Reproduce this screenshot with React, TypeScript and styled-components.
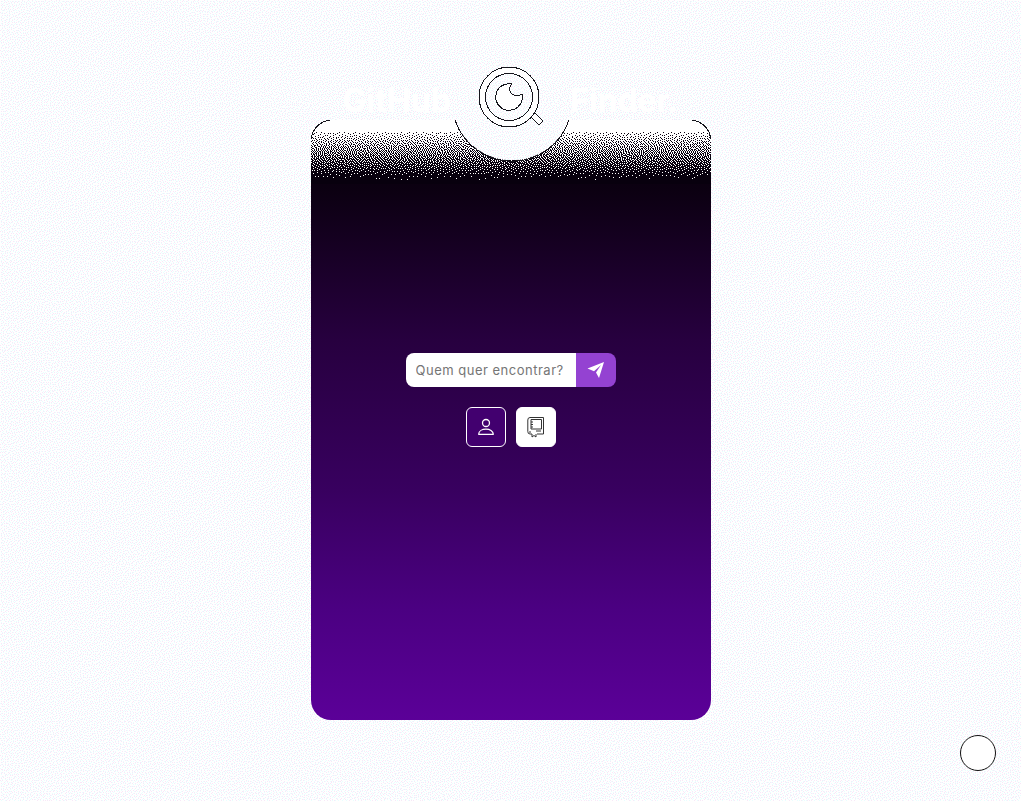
import React, { useEffect, useRef } from 'react';
import styled, { createGlobalStyle } from 'styled-components';

const Global = createGlobalStyle`
  * { box-sizing: border-box; }
  body { margin: 0; background: #fafaff; font-family: Inter, "Liberation Sans", sans-serif; overflow: hidden; }
`;

type Colour = [number, number, number];

const paperPalette: Colour[] = [[255, 255, 255], [248, 232, 248], [232, 255, 255]];
const inkPalette: Colour[] = [[255, 255, 255], [8, 0, 14]];

/* Fills a canvas by error diffusion between a few palette colours. */
function diffuse(canvas: HTMLCanvasElement, palette: Colour[], tone: (y: number) => Colour) {
  const { width: w, height: h } = canvas;
  const ctx = canvas.getContext('2d');
  if (!ctx) return;
  const image = ctx.createImageData(w, h);
  const err = new Float32Array((w + 2) * (h + 1) * 3);
  let seed = 7;
  const random = () => {
    seed = (seed * 1664525 + 1013904223) >>> 0;
    return seed / 4294967296 - 0.5;
  };
  for (let y = 0; y < h; y++) {
    const base = tone(y);
    for (let x = 0; x < w; x++) {
      const at = (y * (w + 2) + x + 1) * 3;
      const want = base.map((v, k) => v + err[at + k]);
      const jitter = random() * (palette.length === 2 ? 70 : 8);
      let best = palette[0];
      let least = Infinity;
      for (const p of palette) {
        const d = p.reduce((sum, v, k) => sum + (v - want[k] - jitter) ** 2, 0);
        if (d < least) { least = d; best = p; }
      }
      const out = (y * w + x) * 4;
      for (let k = 0; k < 3; k++) {
        const e = Math.max(-255, Math.min(255, want[k] - best[k]));
        image.data[out + k] = best[k];
        err[at + 3 + k] += e * 7 / 16;
        const below = at + (w + 2) * 3 + k;
        err[below - 3] += e * 3 / 16;
        err[below] += e * 5 / 16;
        err[below + 3] += e / 16;
      }
      image.data[out + 3] = 255;
    }
  }
  ctx.putImageData(image, 0, 0);
}

const paperTone = (): Colour => [250, 251, 254];
const inkTone = (y: number): Colour => {
  const t = Math.min(1, y / 56);
  const v = 255 * Math.pow(1 - t, 1.25);
  return [Math.max(8, v), Math.max(0, v), Math.max(14, v)];
};

const Page = styled.main`
  position: relative;
  height: 801px;
  padding-top: 120px;
  display: flex;
  justify-content: center;
  align-items: flex-start;
`;

const Grain = styled.canvas`
  position: absolute;
  inset: 0;
`;

const Card = styled.section`
  position: relative;
  width: 400px;
  height: 600px;
  border-radius: 20px;
  background: linear-gradient(#fff 0 8px, #060009 8px, #0c0012 72px, #27003f 220px, #38005f 370px, #4b0082 490px, #5b0098 600px);
  display: flex;
  flex-direction: column;
  align-items: center;
  padding-top: 233px;
  gap: 20px;
`;

const Fade = styled.canvas`
  position: absolute;
  left: 0;
  top: 8px;
`;

const Outline = styled.svg`
  position: absolute;
  left: 0;
  top: -60px;
`;

const Notch = styled.div`
  position: absolute;
  left: 141px;
  top: -20px;
  width: 120px;
  height: 60px;
  overflow: hidden;
`;

const NotchDisc = styled.div`
  position: absolute;
  bottom: 0;
  left: 0;
  width: 120px;
  height: 120px;
  border-radius: 50%;
  overflow: hidden;
  background: #fafaff;
`;

const Title = styled.h1`
  position: absolute;
  top: -39px;
  left: 32px;
  width: 336px;
  margin: 0;
  display: flex;
  justify-content: space-between;
  color: #fff;
  font-size: 32px;
  line-height: 39px;
  font-weight: 700;
`;

const Search = styled.form`
  position: relative;
  display: flex;
  width: 210px;
  height: 34px;
  border-radius: 8px;
  overflow: hidden;
`;

const Field = styled.input`
  width: 170px;
  border: 0;
  padding: 0 10px;
  background: #fff;
  color: #333;
  font: 400 13px Inter, sans-serif;
  letter-spacing: 0.5px;
  outline: 0;
  &::placeholder { color: #757575; opacity: 1; }
`;

const Send = styled.button`
  width: 40px;
  border: 0;
  padding: 0;
  background: #9442d2;
  display: grid;
  place-items: center;
`;

const Modes = styled.div`
  position: relative;
  display: flex;
  gap: 10px;
`;

const Mode = styled.button<{ $on?: boolean }>`
  width: 40px;
  height: 40px;
  padding: 0;
  border: 1px solid #fff;
  border-radius: 6px;
  background: ${p => (p.$on ? '#fff' : '#42006f')};
  display: grid;
  place-items: center;
`;

const Round = styled.button`
  position: absolute;
  left: 960px;
  top: 735px;
  width: 36px;
  height: 36px;
  border: 1px solid #111;
  border-radius: 50%;
  background: #fff;
`;

export default function App() {
  const paper = useRef<HTMLCanvasElement>(null);
  const notch = useRef<HTMLCanvasElement>(null);
  const fade = useRef<HTMLCanvasElement>(null);

  useEffect(() => {
    if (paper.current) diffuse(paper.current, paperPalette, paperTone);
    if (notch.current) diffuse(notch.current, paperPalette, paperTone);
    if (fade.current) diffuse(fade.current, inkPalette, inkTone);
  }, []);

  return (
    <>
      <Global />
      <Page>
        <Grain ref={paper} width={1021} height={801} />
        <Card>
          <Fade ref={fade} width={400} height={56} />
          <Notch><NotchDisc><Grain ref={notch} width={120} height={120} /></NotchDisc></Notch>
          <Outline width="400" height="120" viewBox="0 0 400 120" fill="none" stroke="#15151c" shapeRendering="crispEdges">
            <path d="M.5 79A19.5 19.5 0 0 1 19 60.5M381 60.5A19.5 19.5 0 0 1 399.5 79M144 60A60 60 0 0 0 258 60" />
            <g fill="#fff">
              <path d="M220 57l4-4 8 8-4 4z" stroke="#15151c" />
              <path fillRule="evenodd" d="M198 7a30 30 0 1 0 0 60a30 30 0 1 0 0-60zM198 13.500a23.500 23.500 0 1 1 0 47a23.500 23.500 0 1 1 0-47z" />
              <path d="M201 24A13.300 13.300 0 1 0 211 34Q206 38 201 34Q196 29 201 24z" />
            </g>
          </Outline>
          <Title><span>GitHub</span><span>Finder.</span></Title>
          <Search onSubmit={e => e.preventDefault()}>
            <Field placeholder="Quem quer encontrar?" />
            <Send aria-label="Buscar">
              <svg width="18" height="18" viewBox="0 0 18 18" fill="#fff"><path d="M17 1L.5 7.500L7 10.200L14 4L9 11.500L12 17z" /></svg>
            </Send>
          </Search>
          <Modes>
            <Mode aria-label="Usuário">
              <svg width="18" height="18" viewBox="0 0 18 18" fill="none" stroke="#fff" strokeWidth="1.300"><circle cx="9" cy="5" r="3.500" /><path d="M1.700 16.300C1.700 9.500 16.300 9.500 16.300 16.300z" strokeLinejoin="round" /></svg>
            </Mode>
            <Mode $on aria-label="Repositório">
              <svg width="18" height="22" viewBox="0 0 18 22" fill="none" stroke="#333"><path d="M5 18H3Q.8 18 .8 15.500V4Q.8 1.500 3 1.500H16.500V18H10M4 3.500H14.500V13H4zM4 6h2M4 8.500h2M4 11h2M3 15v2M9 15h5M5 18v3l2-1.500L9 21v-3" /></svg>
            </Mode>
          </Modes>
        </Card>
        <Round aria-label="Tema" />
      </Page>
    </>
  );
}
